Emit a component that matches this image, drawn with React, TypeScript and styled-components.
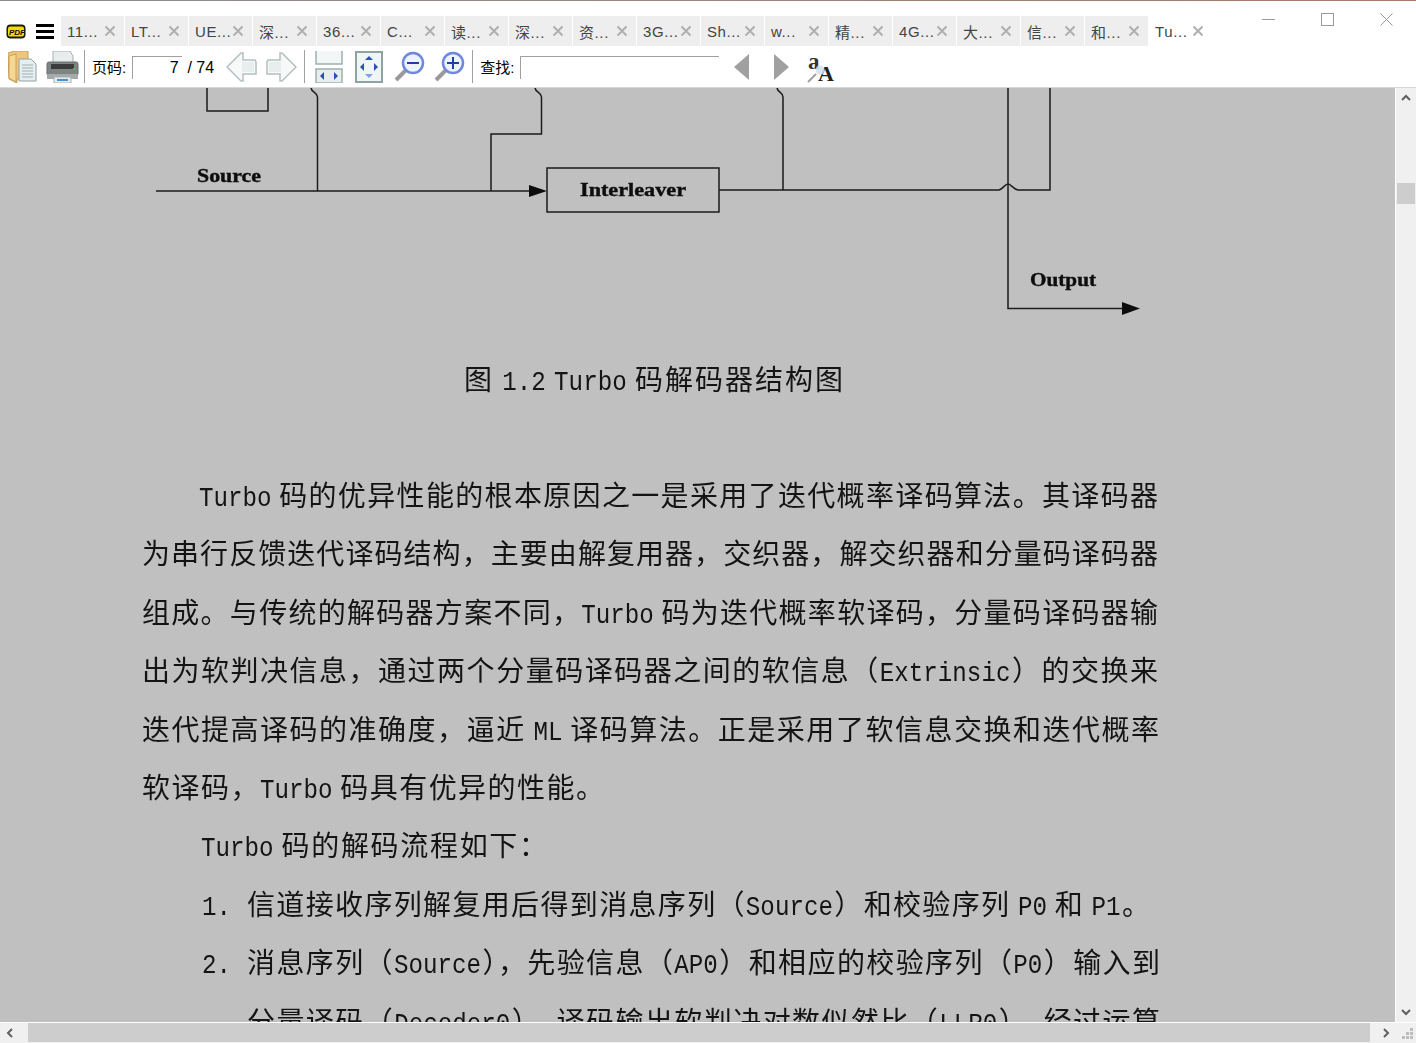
import React from 'react'
import styled, { createGlobalStyle } from 'styled-components'

const GlobalStyle = createGlobalStyle`
  html, body {
    margin: 0;
    padding: 0;
    background: #fff;
  }
`

const Window = styled.div`
  width: 1416px;
  height: 1043px;
  display: flex;
  flex-direction: column;
  overflow: hidden;
  background: #fff;
  font-family: "Liberation Sans", "Noto Sans CJK SC", sans-serif;
`
const TopLine = styled.div`
  height: 1px;
  flex: none;
  background: linear-gradient(to right, #8c8c8c, #9a8680 50%, #a9786a);
`
const TitleBar = styled.div`
  height: 45px;
  flex: none;
  display: flex;
  align-items: flex-start;
`
const AppIcon = styled.svg`
  width: 20px;
  height: 15px;
  margin: 23px 0 0 6px;
  flex: none;
`
const Burger = styled.div`
  width: 18px;
  height: 15px;
  margin: 23px 7px 0 10px;
  flex: none;
  border-top: 3px solid #000;
  border-bottom: 3px solid #000;
  box-sizing: border-box;
  position: relative;
  &::after {
    content: '';
    position: absolute;
    left: 0;
    right: 0;
    top: 3px;
    height: 3px;
    background: #000;
  }
`
const Tabs = styled.div`
  display: flex;
  gap: 1px;
  margin-top: 15px;
`
const Tab = styled.div<{ $active?: boolean }>`
  width: 63px;
  height: 30px;
  box-sizing: border-box;
  padding: 0 8px 0 6px;
  display: flex;
  align-items: center;
  justify-content: space-between;
  background: ${p => (p.$active ? '#fff' : '#eeeeee')};
  color: #444;
  font-size: 15px;
  letter-spacing: 0.6px;
`
const TabClose = styled.svg`
  width: 12px;
  height: 12px;
  flex: none;
`
const WindowControls = styled.div`
  margin-left: auto;
  display: flex;
  margin-top: 12px;
  margin-right: 23px;
  gap: 46px;
`
const WinIcon = styled.svg`
  width: 13px;
  height: 13px;
  display: block;
`
const Toolbar = styled.div`
  height: 41px;
  flex: none;
  display: flex;
  align-items: center;
  box-sizing: border-box;
  color: #000;
`
const Tool = styled.svg<{ $left: number }>`
  flex: none;
  display: block;
  margin-left: ${p => p.$left}px;
`
const Separator = styled.div<{ $left: number }>`
  width: 1px;
  height: 33px;
  background: #a0a0a0;
  margin-left: ${p => p.$left}px;
  flex: none;
`
const ToolLabel = styled.span<{ $left: number }>`
  margin-left: ${p => p.$left}px;
  font-size: 15px;
  flex: none;
`
const Field = styled.div<{ $left: number; $width: number }>`
  width: ${p => p.$width}px;
  height: 23px;
  margin-left: ${p => p.$left}px;
  margin-top: 2px;
  box-sizing: border-box;
  border-top: 1px solid #a0a0a0;
  border-left: 1px solid #a0a0a0;
  flex: none;
`
const PageValue = styled.div`
  width: 82px;
  padding-right: 1px;
  box-sizing: border-box;
  text-align: right;
  font-size: 16px;
  line-height: 21px;
  white-space: pre;
`
const Middle = styled.div`
  flex: 1;
  min-height: 0;
  display: flex;
  border-top: 1px solid #d8d8d8;
`
const Viewport = styled.div`
  flex: 1;
  min-width: 0;
  background: #c0c0c0;
  overflow: hidden;
  border-right: 1px solid #fff;
`
const Diagram = styled.svg`
  display: block;
  width: 1395px;
  height: 261px;
`
const PageText = styled.div`
  margin-left: 142px;
  color: #141414;
  font-family: "Noto Sans CJK SC", "Noto Sans", sans-serif;
  font-size: 28px;
  filter: blur(0.35px);
`
const Caption = styled.div`
  width: 379px;
  height: 58px;
  line-height: 58px;
  margin: 0 0 58px 322px;
  text-align: justify;
  text-align-last: justify;
  white-space: nowrap;
`
const Line = styled.div<{ $indent?: number; $width: number }>`
  width: ${p => p.$width}px;
  margin-left: ${p => p.$indent ?? 0}px;
  height: 58.4px;
  line-height: 58.4px;
  text-align: justify;
  text-align-last: justify;
  white-space: nowrap;
`
const ListLine = styled(Line)`
  display: flex;
`
const ListNumber = styled.div`
  width: 45px;
  flex: none;
  text-align-last: left;
`
const ListBody = styled.div`
  flex: 1;
  min-width: 0;
`
const Latin = styled.span`
  display: inline-block;
  font-family: "Liberation Mono", monospace;
  font-size: 24.2px;
  text-align-last: left;
  transform: scaleY(1.16);
  transform-origin: 50% 60%;
`
const VScroll = styled.div`
  width: 20px;
  flex: none;
  background: #f0f0f0;
  display: flex;
  flex-direction: column;
  align-items: stretch;
`
const ScrollBtn = styled.div`
  min-width: 20px;
  min-height: 20px;
  flex: none;
  display: flex;
  align-items: center;
  justify-content: center;
`
const VThumb = styled.div`
  height: 21px;
  margin: 75px 1px 0 1px;
  background: #cdcdcd;
  flex: none;
`
const VGap = styled.div`
  flex: 1;
`
const Bottom = styled.div`
  height: 21px;
  flex: none;
  box-sizing: border-box;
  border-top: 1px solid #fff;
  display: flex;
  background: #f0f0f0;
`
const HThumb = styled.div`
  flex: 1;
  background: #cdcdcd;
  margin: 0 6px 1px 8px;
`
const Grip = styled.svg`
  width: 20px;
  height: 20px;
  flex: none;
  display: block;
`

const tabs = ['11...', 'LT...', 'UE...', '深...', '36...', 'C...', '读...', '深...', '资...', '3G...', 'Sh...', 'w...', '精...', '4G...', '大...', '信...', '和...', 'Tu...']

// latin runs in the pdf are half-width, so they get their own font size
const Mixed = ({ text }: { text: string }) => (
  <>
    {text.split(/([A-Za-z0-9.]+)/).map((part, i) => (
      i % 2 === 1 ? <Latin key={i}>{part}</Latin> : part
    ))}
  </>
)

const Chevron = ({ points }: { points: string }) => (
  <svg width="10" height="10" viewBox="0 0 10 10">
    <polyline points={points} fill="none" stroke="#606060" strokeWidth="2" />
  </svg>
)

const OpenIcon = () => (
  <Tool $left={8} width="29" height="32" viewBox="0 0 29 32">
    <path d="M0 2 L7 0 L20 0 L20 28 L9 28 L9 32 L1 28 Z" fill="#eec67a" stroke="#c9a25c" />
    <path d="M1 5 L8 3 L8 31 L1 27 Z" fill="#f6d793" stroke="#b88f48" strokeWidth="0.7" />
    <path d="M11 8 L23 8 L28 13 L28 30 L11 30 Z" fill="#e6eef0" stroke="#8fa3a3" />
    <path d="M14 14 H25 M14 17 H25 M14 20 H25 M14 23 H25 M14 26 H25" stroke="#9fb0b0" strokeWidth="1" />
  </Tool>
)

const PrintIcon = () => (
  <Tool $left={9} width="33" height="32" viewBox="0 0 33 32">
    <path d="M7 0 H24 L27 5 V12 H7 Z" fill="#e8ecec" stroke="#a8b0b0" />
    <rect x="1" y="11" width="31" height="14" rx="2" fill="#7e8484" stroke="#686c6c" />
    <rect x="5" y="13" width="23" height="5" fill="#3a3c3c" />
    <rect x="27" y="17" width="2" height="2" fill="#3fbf4f" />
    <rect x="1" y="23" width="31" height="5" fill="#a4aaaa" />
    <rect x="8" y="26" width="17" height="6" fill="#e6ecec" stroke="#a8b0b0" />
    <rect x="11" y="28" width="11" height="2" fill="#4d8fd0" />
  </Tool>
)

const ArrowIcon = ({ left, flip }: { left: number; flip?: boolean }) => (
  <Tool $left={left} width="31" height="30" viewBox="0 0 31 30">
    <g transform={flip ? 'matrix(-1 0 0 1 31 0)' : undefined}>
      <path d="M1 15 L15 1 L17 1 L17 8 L29 8 L30 10 L30 22 L17 22 L17 29 L15 29 Z" fill="#f7f9f9" stroke="#b4c0c0" strokeWidth="1.5" />
      <path d="M16 10 H28 V20 H16" fill="#e8eeee" />
    </g>
  </Tool>
)

const FitWidthIcon = () => (
  <Tool $left={10} width="28" height="32" viewBox="0 0 28 32">
    <path d="M1 0 V13 H27 V0" fill="#f2f6f6" stroke="#9fb0b0" strokeWidth="1.5" />
    <rect x="1" y="18" width="26" height="14" fill="#e8eeee" stroke="#9fb0b0" strokeWidth="1.5" />
    <path d="M5 25 L9 21 V29 Z M23 25 L19 21 V29 Z" fill="#2a50b0" />
  </Tool>
)

const FitPageIcon = () => (
  <Tool $left={12} width="28" height="32" viewBox="0 0 28 32">
    <rect x="1" y="1" width="26" height="30" fill="#f0f5f5" stroke="#8fa3a3" strokeWidth="2" />
    <path d="M14 5 L18 9 H10 Z" fill="#2a50d0" />
    <path d="M14 27 L18 23 H10 Z" fill="#80a0e8" />
    <path d="M5 16 L9 12 V20 Z M23 16 L19 12 V20 Z" fill="#2a50b0" />
  </Tool>
)

const ZoomIcon = ({ left, plus }: { left: number; plus?: boolean }) => (
  <Tool $left={left} width="31" height="31" viewBox="0 0 31 31">
    <line x1="2" y1="29" x2="12" y2="19" stroke="#9a9a9a" strokeWidth="4" />
    <circle cx="19" cy="12" r="10" fill="#eef3fb" stroke="#6f88e0" strokeWidth="2.5" />
    <path d="M13 12 H25" stroke="#1f3fa8" strokeWidth="2" />
    {plus ? <path d="M19 6 V18" stroke="#1f3fa8" strokeWidth="2" /> : null}
  </Tool>
)

const Triangle = ({ left, flip }: { left: number; flip?: boolean }) => (
  <Tool $left={left} width="15" height="26" viewBox="0 0 15 26">
    <path d={flip ? 'M0 0 L15 13 L0 26 Z' : 'M15 0 L0 13 L15 26 Z'} fill="#a0a0a0" />
  </Tool>
)

const FontIcon = () => (
  <Tool $left={18} width="28" height="36" viewBox="0 0 28 36">
    <text x="1" y="20" fontFamily="Liberation Serif" fontWeight="bold" fontSize="23" fill="#333">a</text>
    <text x="11" y="32" fontFamily="Liberation Serif" fontWeight="bold" fontSize="22" fill="#222">A</text>
    <circle cx="13" cy="21" r="4.5" fill="#cfe0f0" opacity="0.85" />
    <line x1="1" y1="33" x2="9" y2="25" stroke="#a0a0a0" strokeWidth="2" />
  </Tool>
)

const App = () => (
  <Window lang="zh-CN">
    <GlobalStyle />
    <TopLine />
    <TitleBar>
      <AppIcon viewBox="0 0 20 15">
        <rect x="0.5" y="0.5" width="19" height="14" rx="4" fill="#1a1a10" />
        <rect x="2" y="2.5" width="16" height="10" rx="2" fill="#f0dc00" />
        <text x="3" y="10.5" fontSize="8" fontWeight="bold" fontStyle="italic" fontFamily="Liberation Sans" fill="#111">PDF</text>
      </AppIcon>
      <Burger />
      <Tabs>
        {tabs.map((title, i) => (
          <Tab key={i} $active={i === tabs.length - 1}>
            <span>{title}</span>
            <TabClose viewBox="0 0 12 12">
              <path d="M1.5 1.5 L10.5 10.5 M10.5 1.5 L1.5 10.5" stroke="#b0b0b0" strokeWidth="2" />
            </TabClose>
          </Tab>
        ))}
      </Tabs>
      <WindowControls>
        <WinIcon viewBox="0 0 13 13"><path d="M0 6.5 H13" stroke="#9a9a9a" /></WinIcon>
        <WinIcon viewBox="0 0 13 13"><rect x="0.5" y="0.5" width="12" height="12" fill="none" stroke="#9a9a9a" /></WinIcon>
        <WinIcon viewBox="0 0 13 13"><path d="M0.5 0.5 L12.5 12.5 M12.5 0.5 L0.5 12.5" stroke="#9a9a9a" /></WinIcon>
      </WindowControls>
    </TitleBar>
    <Toolbar>
      <OpenIcon />
      <PrintIcon />
      <Separator $left={5} />
      <ToolLabel $left={7}>页码:</ToolLabel>
      <Field $left={6} $width={50}>
        <PageValue>{'7  / 74'}</PageValue>
      </Field>
      <ArrowIcon left={44} />
      <ArrowIcon left={9} flip />
      <Separator $left={7} />
      <FitWidthIcon />
      <FitPageIcon />
      <ZoomIcon left={11} />
      <ZoomIcon left={9} plus />
      <Separator $left={7} />
      <ToolLabel $left={7}>查找:</ToolLabel>
      <Field $left={6} $width={199} />
      <Triangle left={15} />
      <Triangle left={25} flip />
      <FontIcon />
    </Toolbar>
    <Middle>
      <Viewport>
        <Diagram viewBox="0 88 1395 261">
          <defs>
            <filter id="scan" x="0" y="0" width="100%" height="100%">
              <feTurbulence type="fractalNoise" baseFrequency="0.7" numOctaves="2" seed="4" />
              <feDisplacementMap in="SourceGraphic" scale="1.2" />
              <feGaussianBlur stdDeviation="0.3" />
            </filter>
          </defs>
          <g filter="url(#scan)">
            <g fill="none" stroke="#1c1c1c" strokeWidth="1.5">
              <path d="M207 88 V111 H268 V88" />
              <path d="M311 88 C312 93 317 92 317.5 97 V191" />
              <path d="M535 88 C536 93 541 92 541.5 97 V134 H491 V191" />
              <path d="M777 88 C778 93 783 92 783 97 V190" />
              <path d="M156 191 H532" />
              <rect x="547" y="168" width="172" height="44" />
              <path d="M719 190 H999 C1003 189 1005 184 1008 184 C1011 184 1013 189 1018 190 H1050 V88" />
              <path d="M1008 88 V308.5 H1124" />
            </g>
            <path d="M529 185 L547 191 L529 197 Z" fill="#111" />
            <path d="M1122 302 L1140 308.5 L1122 315 Z" fill="#111" />
            <g fontFamily="Liberation Serif" fontWeight="bold" fontSize="18" fill="#111" stroke="#111" strokeWidth="0.4">
              <text x="197" y="182" textLength="64" lengthAdjust="spacingAndGlyphs">Source</text>
              <text x="580" y="196" textLength="106" lengthAdjust="spacingAndGlyphs">Interleaver</text>
              <text x="1030" y="286" textLength="66" lengthAdjust="spacingAndGlyphs">Output</text>
            </g>
          </g>
        </Diagram>
        <PageText>
          <Caption><Mixed text="图 1.2 Turbo 码解码器结构图" /></Caption>
          <Line $indent={57} $width={959}><Mixed text="Turbo 码的优异性能的根本原因之一是采用了迭代概率译码算法。其译码器" /></Line>
          <Line $width={1016}><Mixed text="为串行反馈迭代译码结构，主要由解复用器，交织器，解交织器和分量码译码器" /></Line>
          <Line $width={1016}><Mixed text="组成。与传统的解码器方案不同，Turbo 码为迭代概率软译码，分量码译码器输" /></Line>
          <Line $width={1016}><Mixed text="出为软判决信息，通过两个分量码译码器之间的软信息（Extrinsic）的交换来" /></Line>
          <Line $width={1017}><Mixed text="迭代提高译码的准确度，逼近 ML 译码算法。正是采用了软信息交换和迭代概率" /></Line>
          <Line $width={462}><Mixed text="软译码，Turbo 码具有优异的性能。" /></Line>
          <Line $indent={59} $width={346}><Mixed text="Turbo 码的解码流程如下：" /></Line>
          <ListLine $indent={60} $width={948}>
            <ListNumber><Latin>1.</Latin></ListNumber>
            <ListBody><Mixed text="信道接收序列解复用后得到消息序列（Source）和校验序列 P0 和 P1。" /></ListBody>
          </ListLine>
          <ListLine $indent={60} $width={958}>
            <ListNumber><Latin>2.</Latin></ListNumber>
            <ListBody><Mixed text="消息序列（Source），先验信息（AP0）和相应的校验序列（P0）输入到" /></ListBody>
          </ListLine>
          <Line $indent={105} $width={913}><Mixed text="分量译码（Decoder0），译码输出软判决对数似然比（LLR0），经过运算" /></Line>
        </PageText>
      </Viewport>
      <VScroll>
        <ScrollBtn><Chevron points="1,7 5,3 9,7" /></ScrollBtn>
        <VThumb />
        <VGap />
        <ScrollBtn><Chevron points="1,3 5,7 9,3" /></ScrollBtn>
      </VScroll>
    </Middle>
    <Bottom>
      <ScrollBtn><Chevron points="7,1 3,5 7,9" /></ScrollBtn>
      <HThumb />
      <ScrollBtn><Chevron points="3,1 7,5 3,9" /></ScrollBtn>
      <Grip viewBox="0 0 20 20">
        <g fill="#bdbdbd">
          <rect x="14" y="5" width="3" height="3" />
          <rect x="10" y="9" width="3" height="3" />
          <rect x="14" y="9" width="3" height="3" />
          <rect x="6" y="13" width="3" height="3" />
          <rect x="10" y="13" width="3" height="3" />
          <rect x="14" y="13" width="3" height="3" />
        </g>
      </Grip>
    </Bottom>
  </Window>
)

export default App
